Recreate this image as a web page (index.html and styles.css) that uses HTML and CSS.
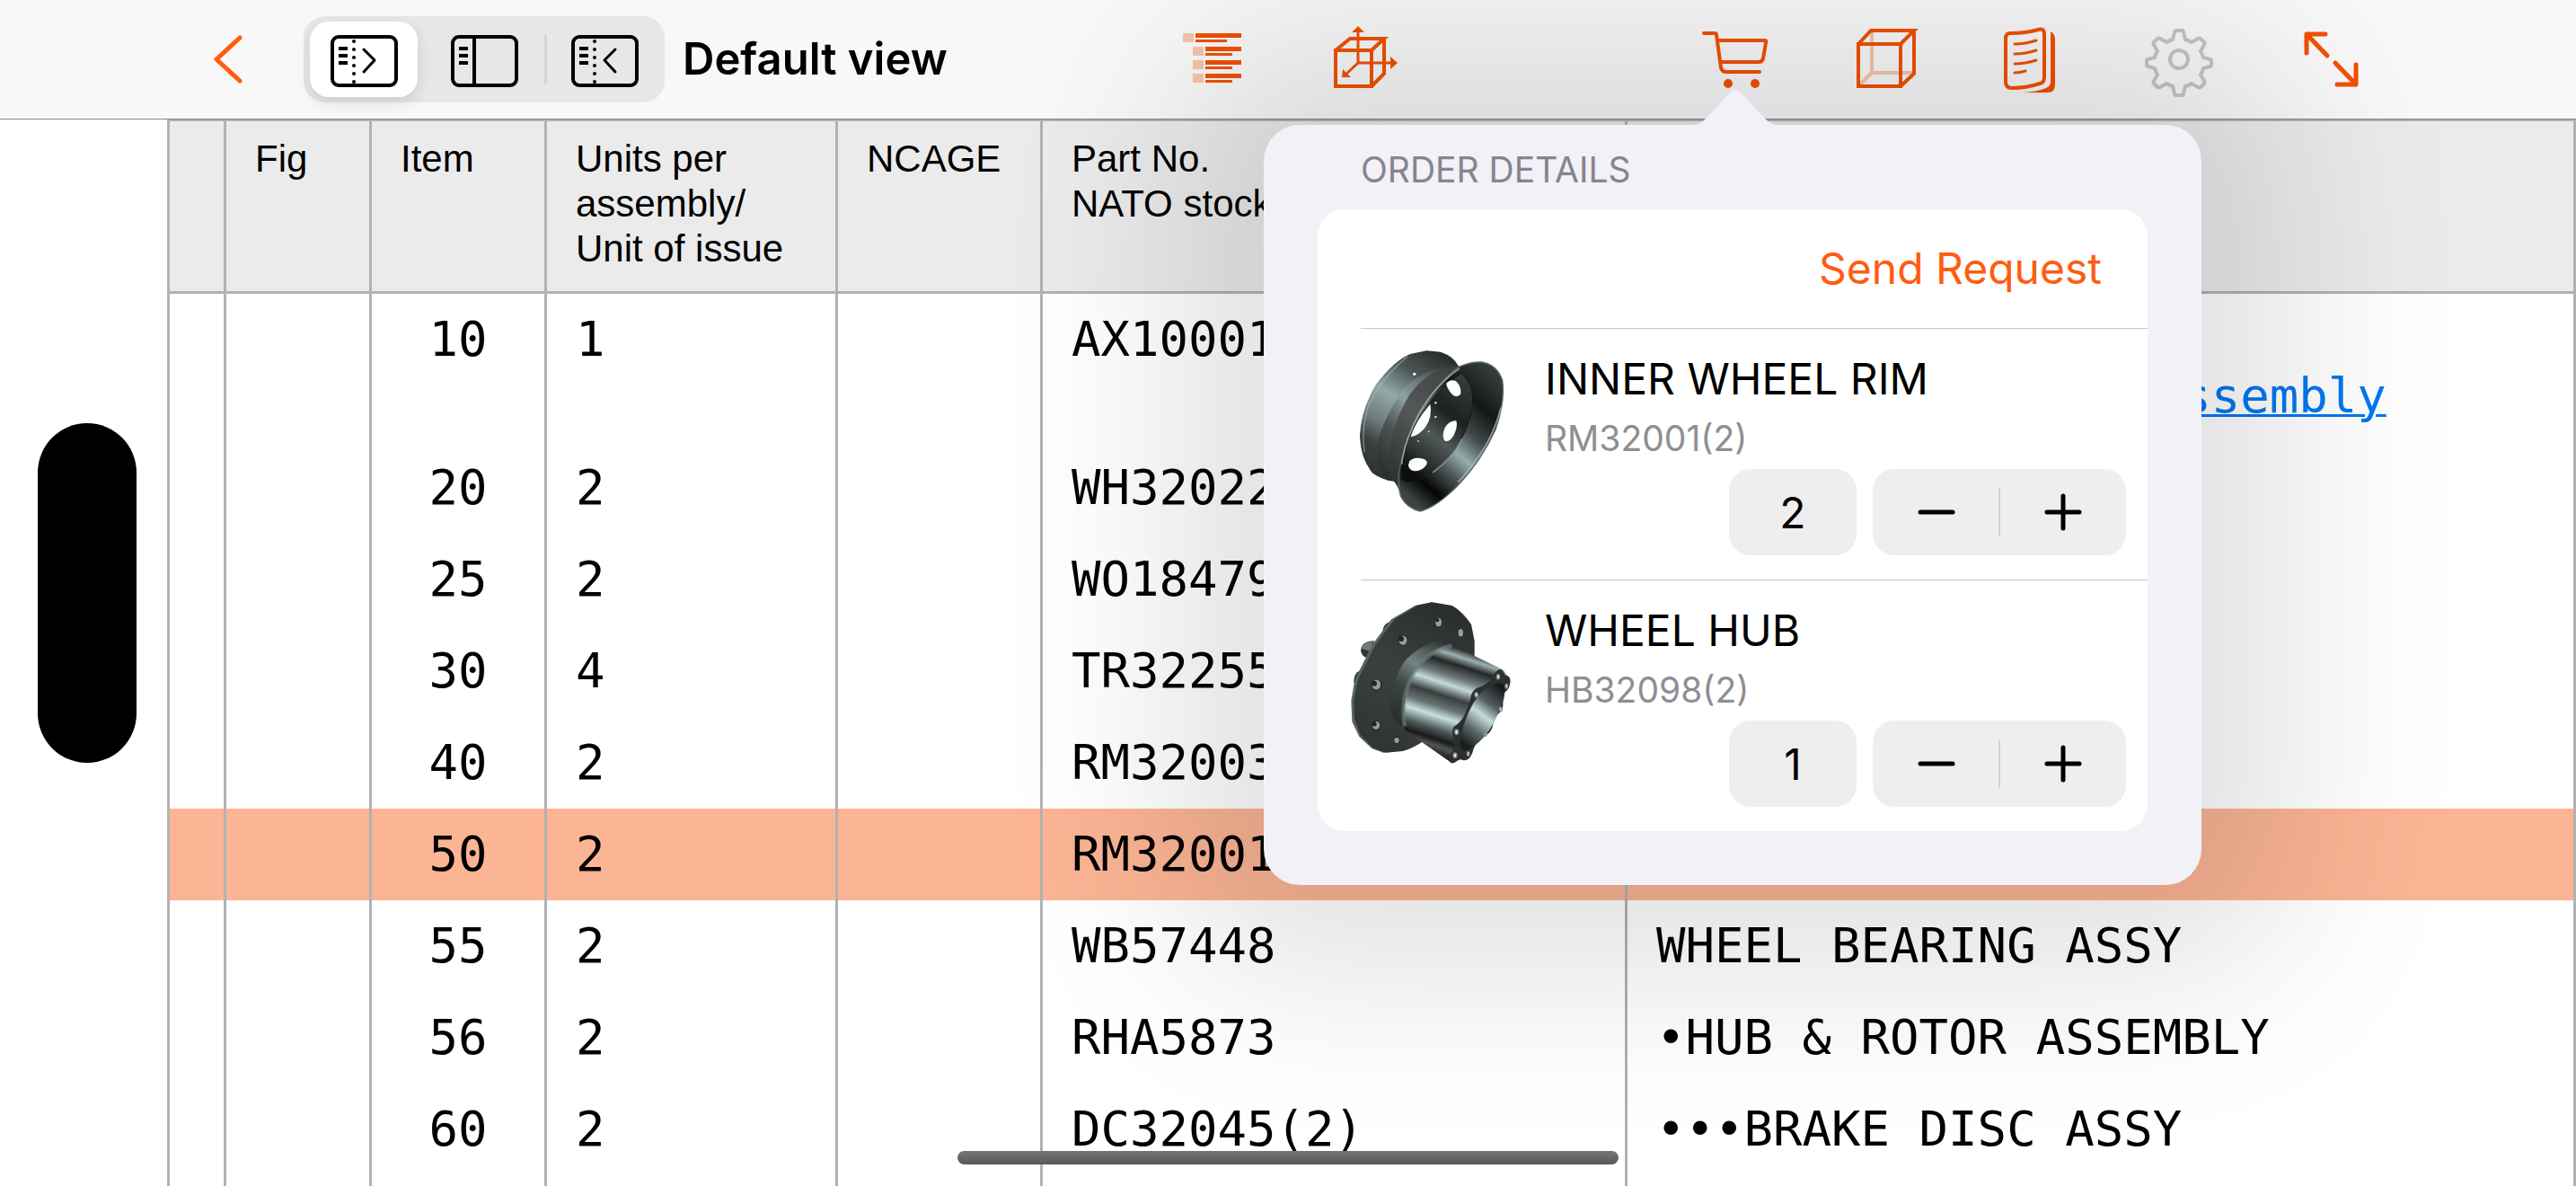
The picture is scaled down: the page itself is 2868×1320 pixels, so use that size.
FILE: index.html
```html
<!DOCTYPE html>
<html lang="en">
	<head>
		<meta charset="utf-8">
		<title>Default view</title>
		<link rel="stylesheet" href="styles.css">
	</head>
	<body>
		<header class="toolbar">
			<button class="back" aria-label="Back">
				<svg width="36" height="60" viewBox="0 0 36 60"><path d="M31 6L5 30l26 24" /></svg>
			</button>
			<div class="segments">
				<button class="segment selected" aria-label="Show list">
					<svg width="76" height="64" viewBox="0 0 76 64">
						<rect x="3" y="7" width="71" height="54" rx="7" />
						<path d="M27 12v46" stroke-dasharray="0 9" class="dots" />
						<path d="M10 20h10M10 28h10M10 36h10" />
						<path d="M38 21l12 12l-12 13" class="thin" />
					</svg>
				</button>
				<button class="segment" aria-label="Split view">
					<svg width="76" height="64" viewBox="0 0 76 64">
						<rect x="3" y="7" width="71" height="54" rx="7" />
						<path d="M27 7v54" />
						<path d="M10 20h10M10 28h10M10 36h10" />
					</svg>
				</button>
				<button class="segment divided" aria-label="Hide list">
					<svg width="76" height="64" viewBox="0 0 76 64">
						<rect x="3" y="7" width="71" height="54" rx="7" />
						<path d="M27 12v46" stroke-dasharray="0 9" class="dots" />
						<path d="M10 20h10M10 28h10M10 36h10" />
						<path d="M50 21l-12 12l12 13" class="thin" />
					</svg>
				</button>
			</div>
			<h1>Default view</h1>

			<div class="tools tools-view">
				<button class="tool" aria-label="Parts list">
					<svg width="96" height="96" viewBox="0 0 96 96">
						<path class="fill faded" d="M15 19h12v10H15zM26 34h12v10H26zM26 49h12v10H26zM26 64h12v10H26z" />
						<path class="fill" d="M29 19h51v5H29zM29 26h35v3H29zM40 34h40v5H40zM40 41h30v3H40zM40 49h40v5H40zM40 56h30v3H40zM40 64h40v5H40zM40 71h30v3H40z" />
					</svg>
				</button>
				<button class="tool" aria-label="Explode">
					<svg width="96" height="96" viewBox="0 0 96 96">
						<path d="M19 38h40v40H19zM19 38L35 25h38L59 38M73 25v39L59 78" />
						<path class="axis" d="M44 16v36h38M44 52L29 66" />
						<path class="fill" d="M44 11l7 7H37zM88 52l-8 7V45zM26 68l1-9 9 9z" />
					</svg>
				</button>
			</div>

			<div class="tools">
				<div class="cart">
					<button class="tool" aria-label="Order">
						<svg width="96" height="96" viewBox="0 0 96 96">
							<path class="round" d="M13 21h12q2 0 2 2l5 36q1 5 6 5h37M29 29h52q2 0 1 3l-3 17q-1 4-5 4H33" />
							<circle class="fill" cx="40" cy="77" r="5" />
							<circle class="fill" cx="70" cy="77" r="5" />
						</svg>
					</button>

					<section class="popover">
						<svg class="arrow" width="104" height="40" viewBox="0 0 104 40"><path d="M0 40q12 0 20-9L44 5q8-9 16 0l24 26q8 9 20 9z" /></svg>
						<h2>ORDER DETAILS</h2>
						<div class="card">
							<div class="send"><button>Send Request</button></div>

							<div class="part">
								<svg class="thumb" viewBox="0 0 660 660">
									<defs>
										<linearGradient id="barrel" x1="0.65" y1="0" x2="0.15" y2="1">
											<stop offset="0" stop-color="#2b2f2f" /><stop offset="0.2" stop-color="#4d5656" />
											<stop offset="0.4" stop-color="#93a9a8" /><stop offset="0.6" stop-color="#6e7c7c" />
											<stop offset="0.75" stop-color="#3a4040" /><stop offset="1" stop-color="#292c2c" />
										</linearGradient>
										<linearGradient id="groove" x1="0.8" y1="0" x2="0.1" y2="1">
											<stop offset="0" stop-color="#3a4040" /><stop offset="0.4" stop-color="#8da3a2" />
											<stop offset="0.65" stop-color="#4c5454" /><stop offset="1" stop-color="#272a2a" />
										</linearGradient>
										<linearGradient id="lip" x1="0.8" y1="0" x2="0.2" y2="1">
											<stop offset="0" stop-color="#3b4141" /><stop offset="0.5" stop-color="#565858" />
											<stop offset="1" stop-color="#303232" />
										</linearGradient>
										<linearGradient id="bowl" x1="0.85" y1="0.05" x2="0.25" y2="1">
											<stop offset="0" stop-color="#333939" /><stop offset="0.22" stop-color="#151717" />
											<stop offset="0.4" stop-color="#414848" /><stop offset="0.56" stop-color="#96acab" />
											<stop offset="0.7" stop-color="#4a5252" /><stop offset="0.86" stop-color="#050505" />
											<stop offset="1" stop-color="#3e4343" />
										</linearGradient>
										<linearGradient id="disc" x1="0.8" y1="0" x2="0.3" y2="1">
											<stop offset="0" stop-color="#353a3a" /><stop offset="0.35" stop-color="#1e2121" />
											<stop offset="0.6" stop-color="#4f5858" /><stop offset="0.8" stop-color="#303535" />
											<stop offset="1" stop-color="#0c0d0d" />
										</linearGradient>
									</defs>
									<path fill="url(#barrel)" d="M325 61L372 65Q415 80 430 110L480 180L300 520L232 520L215 496Q180 494 145 470Q105 425 102 345Q105 260 155 175Q215 95 270 72Z" />
									<path fill="url(#groove)" d="M425 112Q340 110 255 180Q195 260 165 350Q150 430 195 494L218 497L300 300Z" />
									<path fill="none" stroke="#a9bfbe" stroke-width="4" opacity="0.6" d="M262 80Q175 150 130 245Q105 330 118 400" />
									<path fill="url(#lip)" d="M433 112Q340 115 270 205Q200 320 202 420Q205 465 232 525L300 400L460 130Z" />
									<path fill="url(#bowl)" stroke="#5b6767" stroke-width="4" d="M508 99Q560 107 578 160Q588 230 555 325Q510 425 430 510Q360 582 304 597Q262 588 240 550Q222 500 242 425Q264 325 335 220Q395 135 440 112Q475 98 508 99Z" />
									<path fill="url(#disc)" stroke="#171919" stroke-width="3" d="M440 135Q486 175 478 245Q466 330 410 405Q345 480 282 499Q255 502 240 490Q240 410 275 330Q330 215 440 135Z" />
									<path fill="none" stroke="#91a8a7" stroke-width="5" opacity="0.7" d="M444 355Q405 425 345 468" />
									<path fill="none" stroke="#a2bab9" stroke-width="5" opacity="0.8" d="M435 120Q355 175 300 270Q248 370 242 440M574 250Q550 340 505 405T430 500" />
									<path fill="#fff" d="M337 239Q345 280 322 315Q300 344 272 349Q285 300 337 239Z" />
									<path fill="#fff" d="M390 172Q404 153 423 163Q441 178 439 205Q432 219 414 210Q398 197 390 172Z" />
									<path fill="#fff" d="M424 295Q430 315 415 345Q400 368 386 362Q374 348 386 318Q402 293 424 295Z" />
									<path fill="#fff" d="M268 430Q280 416 305 420Q332 425 325 441Q312 462 287 463Q265 460 264 443Z" />
									<g fill="#c8d5d4"><circle cx="284" cy="139" r="5" fill="#fff" /><circle cx="355" cy="235" r="4" /><circle cx="355" cy="282" r="4" /><circle cx="332" cy="331" r="3" /><circle cx="297" cy="363" r="3" /></g>
								</svg>
								<div class="info">
									<h3>INNER WHEEL RIM</h3>
									<p>RM32001(2)</p>
									<div class="quantity">
										<input type="text" value="2" aria-label="Quantity of INNER WHEEL RIM">
										<div class="stepper">
											<button aria-label="Less"><svg width="48" height="48" viewBox="0 0 48 48"><path d="M6 24h36" /></svg></button>
											<button aria-label="More"><svg width="48" height="48" viewBox="0 0 48 48"><path d="M6 24h36M24 6v36" /></svg></button>
										</div>
									</div>
								</div>
							</div>

							<div class="part">
								<svg class="thumb" viewBox="0 0 660 660">
									<defs>
										<linearGradient id="flange" x1="0.7" y1="0" x2="0.3" y2="1">
											<stop offset="0" stop-color="#2a2d2d" /><stop offset="0.5" stop-color="#3a4040" />
											<stop offset="1" stop-color="#303434" />
										</linearGradient>
										<linearGradient id="collar" x1="0.7" y1="0" x2="0.2" y2="1">
											<stop offset="0" stop-color="#2c3030" /><stop offset="0.35" stop-color="#748382" />
											<stop offset="0.6" stop-color="#3d4444" /><stop offset="1" stop-color="#262929" />
										</linearGradient>
										<linearGradient id="tube" gradientUnits="userSpaceOnUse" x1="430" y1="215" x2="320" y2="555">
											<stop offset="0" stop-color="#2b2f2f" /><stop offset="0.07" stop-color="#9db1b0" />
											<stop offset="0.15" stop-color="#242727" /><stop offset="0.27" stop-color="#6e7a7a" />
											<stop offset="0.35" stop-color="#c4dad9" /><stop offset="0.46" stop-color="#3a3f3f" />
											<stop offset="0.57" stop-color="#667372" /><stop offset="0.66" stop-color="#c8e0de" />
											<stop offset="0.78" stop-color="#4e5757" /><stop offset="0.87" stop-color="#181919" />
											<stop offset="0.93" stop-color="#545656" /><stop offset="1" stop-color="#242626" />
										</linearGradient>
										<linearGradient id="bore" x1="0.8" y1="0" x2="0.3" y2="1">
											<stop offset="0" stop-color="#171919" /><stop offset="0.3" stop-color="#536060" />
											<stop offset="0.5" stop-color="#c5dedb" /><stop offset="0.75" stop-color="#5c6767" />
											<stop offset="1" stop-color="#1b1d1d" />
										</linearGradient>
									</defs>
									<path fill="#343838" d="M150 190Q108 190 105 222Q108 244 130 248ZM215 125Q180 125 178 160L195 160ZM100 290Q80 300 82 330L95 330Z" />
									<path fill="#6f7c7b" d="M145 192Q112 196 108 215L138 226Z" />
									<path fill="#596464" d="M343 61L288 71L207 118L145 200L85 320L73 390L76 460L100 510L142 549L180 563L250 555L230 530L380 100Z" />
									<path fill="url(#flange)" d="M343 61L410 72Q445 92 474 135L485 190V240L400 480L310 527Q280 548 245 558L190 563L148 549L104 505L84 450L82 390L95 320L153 205L218 118L295 71Z" />
									<path fill="url(#collar)" d="M395 185Q430 195 455 220L330 500L275 490Q215 470 203 420Q200 340 250 260Q305 195 395 185Z" />
									<path fill="url(#tube)" d="M385 208Q440 208 465 230L582 287L600 315L440 585L408 597L252 488Q238 400 275 310Q315 235 385 208Z" />
									<path fill="none" stroke="#6f7d7c" stroke-width="14" opacity="0.6" d="M410 206Q330 220 280 300Q235 385 252 475" />
									<path fill="#2c2f2f" d="M562 288Q578 278 586 305Q608 305 604 330Q602 350 586 362Q584 380 580 395Q582 420 568 430Q555 440 548 465Q542 500 520 505Q495 520 482 550Q474 585 456 588Q440 590 434 582Q420 602 405 597Q396 580 414 552Q420 535 414 510Q405 480 425 470Q445 455 455 430Q470 395 474 370Q484 345 510 342Q540 325 550 300Z" />
									<path fill="url(#bore)" d="M550 336Q585 322 586 352Q572 440 520 508Q480 552 448 556Q430 550 440 505Q460 420 500 370Q524 342 550 336Z" />
									<g fill="#8ea09f" stroke="#1d1f1f" stroke-width="3">
										<ellipse cx="246" cy="188" rx="15" ry="17" /><ellipse cx="365" cy="128" rx="12" ry="16" />
										<ellipse cx="439" cy="163" rx="10" ry="14" /><ellipse cx="157" cy="336" rx="16" ry="18" />
										<ellipse cx="156" cy="472" rx="14" ry="15" /><ellipse cx="225" cy="522" rx="10" ry="11" />
									</g>
									<g fill="#202222"><circle cx="240" cy="183" r="9" /><circle cx="150" cy="332" r="9" /><circle cx="150" cy="467" r="8" /><circle cx="361" cy="121" r="6" /></g>
									<g fill="#dceceb" stroke="#798887" stroke-width="4">
										<ellipse cx="564" cy="310" rx="5" ry="8" /><ellipse cx="592" cy="341" rx="4" ry="7" />
										<ellipse cx="491" cy="370" rx="5" ry="8" /><ellipse cx="572" cy="418" rx="4" ry="7" />
										<ellipse cx="425" cy="494" rx="6" ry="8" /><ellipse cx="522" cy="502" rx="3" ry="6" />
										<ellipse cx="420" cy="572" rx="6" ry="8" /><ellipse cx="464" cy="567" rx="4" ry="7" />
									</g>
								</svg>
								<div class="info">
									<h3>WHEEL HUB</h3>
									<p>HB32098(2)</p>
									<div class="quantity">
										<input type="text" value="1" aria-label="Quantity of WHEEL HUB">
										<div class="stepper">
											<button aria-label="Less"><svg width="48" height="48" viewBox="0 0 48 48"><path d="M6 24h36" /></svg></button>
											<button aria-label="More"><svg width="48" height="48" viewBox="0 0 48 48"><path d="M6 24h36M24 6v36" /></svg></button>
										</div>
									</div>
								</div>
							</div>
						</div>
					</section>
				</div>
				<button class="tool" aria-label="3D model">
					<svg width="96" height="96" viewBox="0 0 96 96">
						<path class="faded" d="M34 16v47h47M34 63L19 78" />
						<path d="M19 31h47v47H19zM19 31L33 16h48L66 31M81 16v48L66 78" />
					</svg>
				</button>
				<button class="tool" aria-label="Documents">
					<svg width="96" height="96" viewBox="0 0 96 96">
						<path class="round" d="M22 19q18 0 31-4q7-2 7 5v48q0 6-5 7q-15 5-31 5q-7 0-7-7V25q0-6 5-6z" />
						<path class="round axis" d="M27 31q12 0 24-4M27 42q12 0 24-4M27 53q12 0 24-4M27 63q6 0 12-2" />
						<path class="fill" d="M67 17q5 3 5 8v51q0 9-8 9H36q17-1 26-5q5-2 5-7z" />
					</svg>
				</button>
				<button class="tool" aria-label="Settings" disabled>
					<svg width="96" height="96" viewBox="0 0 96 96">
						<path d="M39 18q0-2 2-2h6q2 0 2 2l2 8q4 1 7 3l7-4q2-1 3 0l4 4q1 1 0 3l-4 7q2 3 3 7l7 2q2 0 2 2v4q0 2-2 2l-7 2q-1 4-3 7l4 7q1 2 0 3l-4 4q-1 1-3 0l-7-4q-3 2-7 3l-2 8q0 2-2 2h-6q-2 0-2-2l-2-8q-4-1-7-3l-7 4q-2 1-3 0l-4-4q-1-1 0-3l4-7q-2-3-3-7l-7-2q-2 0-2-2v-4q0-2 2-2l7-2q1-4 3-7l-4-7q-1-2 0-3l4-4q1-1 3 0l7 4q3-2 7-3z" />
						<circle cx="44" cy="48" r="10" />
					</svg>
				</button>
				<button class="tool" aria-label="Full screen">
					<svg width="96" height="96" viewBox="0 0 96 96">
						<path class="round heavy" d="M41 20H20v21M20 20l23 24M54 76h21V54M75 76L52 52" />
					</svg>
				</button>
			</div>
		</header>

		<main>
			<table>
				<colgroup>
					<col class="col-mark"><col class="col-fig"><col class="col-item"><col class="col-units"><col class="col-ncage"><col class="col-part"><col>
				</colgroup>
				<thead>
					<tr><th></th><th>Fig</th><th>Item</th><th>Units per<br>assembly/<br>Unit of issue</th><th>NCAGE</th><th>Part No.<br>NATO stock</th><th></th></tr>
				</thead>
				<tbody>
					<tr><td></td><td></td><td>10</td><td>1</td><td></td><td>AX10001</td><td><br><a class="nested" href="#assembly">assembly</a></td></tr>
					<tr><td></td><td></td><td>20</td><td>2</td><td></td><td>WH32022</td><td></td></tr>
					<tr><td></td><td></td><td>25</td><td>2</td><td></td><td>WO18479</td><td></td></tr>
					<tr><td></td><td></td><td>30</td><td>4</td><td></td><td>TR32255</td><td></td></tr>
					<tr><td></td><td></td><td>40</td><td>2</td><td></td><td>RM32003</td><td></td></tr>
					<tr class="current"><td></td><td></td><td>50</td><td>2</td><td></td><td>RM32001</td><td></td></tr>
					<tr><td></td><td></td><td>55</td><td>2</td><td></td><td>WB57448</td><td>WHEEL BEARING ASSY</td></tr>
					<tr><td></td><td></td><td>56</td><td>2</td><td></td><td>RHA5873</td><td>•HUB &amp; ROTOR ASSEMBLY</td></tr>
					<tr><td></td><td></td><td>60</td><td>2</td><td></td><td>DC32045(2)</td><td>•••BRAKE DISC ASSY</td></tr>
					<tr><td></td><td></td><td></td><td></td><td></td><td></td><td></td></tr>
				</tbody>
			</table>
		</main>

		<div class="island"></div>
		<div class="home-bar"></div>
	</body>
</html>
```

FILE: styles.css
```css
* {
	box-sizing: border-box;
	}

body {
	display: flex;
	flex-direction: column;
	margin: 0;
	height: 100vh;
	overflow: hidden;
	background: #fff;
	color: #000;
	font-family: Inter, "Liberation Sans", sans-serif;
	}

h1, h2, h3, p {
	margin: 0;
	font-weight: normal;
	}

button {
	margin: 0;
	padding: 0;
	border: 0;
	background: none;
	color: inherit;
	font: inherit;
	}

svg {
	display: block;
	fill: none;
	}

/* toolbar */

.toolbar {
	position: relative;
	z-index: 1;
	display: flex;
	flex: none;
	align-items: center;
	height: 133px;
	padding: 0 224px 0 236px;
	background: #f7f8f7;
	border-bottom: 1px solid #858585;
	}

.back svg {
	stroke: #ff5c10;
	stroke-width: 5;
	stroke-linecap: round;
	stroke-linejoin: round;
	}

.segments {
	display: flex;
	margin: 0 20px 0 66px;
	border-radius: 24px;
	background: #e6e8e7;
	}

.segment {
	position: relative;
	display: flex;
	align-items: center;
	justify-content: center;
	width: 134px;
	height: 96px;
	}

.segment svg {
	position: relative;
	stroke: #000;
	stroke-width: 4;
	}

.segment .thin {
	stroke-width: 3;
	stroke-linecap: round;
	stroke-linejoin: round;
	}

.segment .dots {
	stroke-linecap: round;
	}

.selected::before {
	content: "";
	position: absolute;
	inset: 6px 7px;
	border-radius: 21px;
	background: #fff;
	box-shadow: 0 6px 16px rgba(0, 0, 0, 0.12);
	}

.divided::before {
	content: "";
	position: absolute;
	left: 0;
	top: 21px;
	width: 3px;
	height: 54px;
	background: #d3d5d5;
	}

h1 {
	font-size: 49px;
	font-weight: 600;
	line-height: 60px;
	white-space: nowrap;
	}

.tools {
	display: flex;
	gap: 70px;
	}

.tools-view {
	margin: 0 320px 0 auto;
	}

.tool svg {
	stroke: #f25000;
	stroke-width: 4;
	}

.tool .fill {
	fill: #f25000;
	stroke: none;
	}

.tool .faded {
	opacity: 0.3;
	}

.tool .axis {
	stroke-width: 3;
	}

.tool .round {
	stroke-linecap: round;
	stroke-linejoin: round;
	}

.tool .heavy {
	stroke-width: 5;
	}

.tool:disabled svg {
	stroke: #c4c5c4;
	}

/* order popover */

.cart {
	position: relative;
	}

.popover {
	position: absolute;
	z-index: 2;
	top: 123px;
	left: -477px;
	width: 1044px;
	padding: 0 60px 60px;
	border-radius: 40px;
	background: #f2f1f7;
	box-shadow: 0 0 200px 100px rgba(0, 0, 0, 0.12);
	}

.arrow {
	position: absolute;
	top: -39px;
	left: 473px;
	fill: #f2f1f7;
	}

.popover h2 {
	padding: 26px 0 20px 48px;
	color: #86858b;
	font-size: 39px;
	line-height: 48px;
	}

.card {
	border-radius: 30px;
	background: #fff;
	}

.send {
	height: 132px;
	padding: 30px 51px;
	color: #ff5c10;
	font-size: 48px;
	line-height: 72px;
	text-align: right;
	}

.part {
	position: relative;
	display: flex;
	gap: 20px;
	height: 280px;
	padding: 5px 24px 0 13px;
	}

.part::before {
	content: "";
	position: absolute;
	top: 0;
	right: 0;
	left: 48px;
	height: 1px;
	background: #c6c6c8;
	}

.thumb {
	flex: none;
	width: 220px;
	height: 220px;
	}

.info {
	flex: 1;
	padding-top: 20px;
	}

.info h3 {
	font-size: 48px;
	line-height: 64px;
	}

.info p {
	color: #8e8e93;
	font-size: 39px;
	line-height: 68px;
	}

.quantity {
	display: flex;
	justify-content: flex-end;
	gap: 18px;
	}

.quantity input {
	width: 142px;
	height: 96px;
	padding: 0;
	border: 0;
	border-radius: 24px;
	background: #eee;
	color: #000;
	font: 48px Inter, "Liberation Sans", sans-serif;
	text-align: center;
	}

.stepper {
	display: flex;
	width: 282px;
	height: 96px;
	border-radius: 24px;
	background: linear-gradient(#d3d3d5, #d3d3d5) center / 2px 54px no-repeat #eee;
	}

.stepper button {
	display: flex;
	flex: 1;
	align-items: center;
	justify-content: center;
	}

.stepper svg {
	stroke: #000;
	stroke-width: 5;
	stroke-linecap: round;
	}

/* parts table */

main {
	flex: 1;
	min-height: 0;
	padding-left: 186px;
	overflow: hidden;
	}

table {
	width: 100%;
	table-layout: fixed;
	border-spacing: 0;
	}

.col-mark { width: 63px; }
.col-fig { width: 162px; }
.col-item { width: 195px; }
.col-units { width: 324px; }
.col-ncage { width: 228px; }
.col-part { width: 651px; }

th, td {
	border-left: 3px solid #b2b2b2;
	text-align: left;
	vertical-align: top;
	white-space: nowrap;
	}

th:last-child,
td:last-child {
	border-right: 3px solid #b2b2b2;
	}

th {
	padding: 17px 0 22px 32px;
	border-top: 2px solid #b2b2b2;
	border-bottom: 3px solid #b2b2b2;
	background: #ebebeb;
	font: 42px/50px "Liberation Sans", sans-serif;
	}

td {
	height: 102px;
	padding: 19px 0 20px 32px;
	font: 54px/63px "DejaVu Sans Mono", monospace;
	}

td:nth-child(3) {
	padding-left: 0;
	text-align: center;
	}

th:first-child,
td:first-child {
	padding-left: 0;
	}

td a {
	color: #0078f0;
	text-decoration-thickness: 3px;
	}

.nested {
	margin-left: 17ch;
	}

.current {
	background: #fbb494;
	}

/* device parts that lie over the page */

.island {
	position: fixed;
	top: calc(50% - 189px);
	left: 42px;
	width: 110px;
	height: 378px;
	border-radius: 55px;
	background: #000;
	}

.home-bar {
	position: fixed;
	z-index: 2;
	bottom: 24px;
	left: calc(50% - 368px);
	width: 736px;
	height: 15px;
	border-radius: 8px;
	background: linear-gradient(#757674, #585858);
	}
```
